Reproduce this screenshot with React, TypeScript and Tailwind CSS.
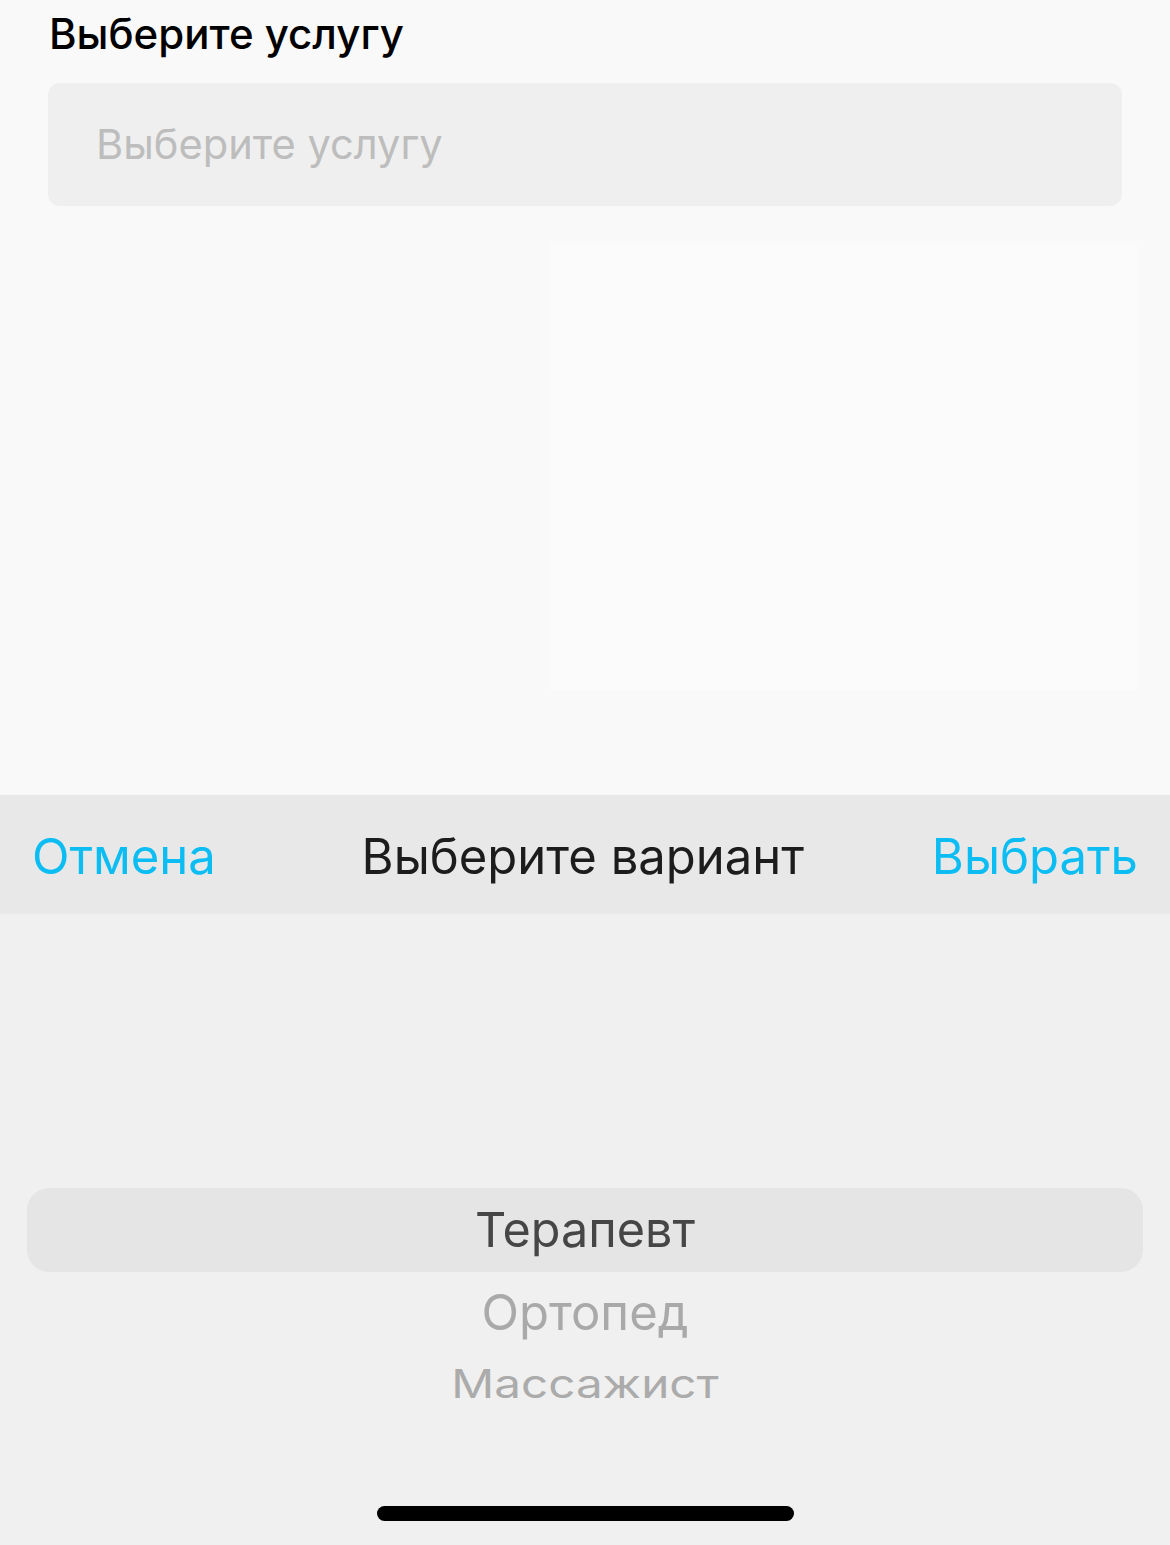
const font = { fontFamily: "Inter, Roboto, 'Noto Sans', sans-serif" }

export default function App() {
  return (
    <div className="w-[1170px] h-[1545px] flex flex-col bg-[#f9f9f9] overflow-hidden" style={font}>
      {/* Form area */}
      <div className="flex-1 flex flex-col px-12">
        <div className="pt-[8px] pl-[1px] text-[42px] leading-[52px] font-medium text-black">Выберите услугу</div>
        <div className="mt-[23px] h-[123px] rounded-[12px] bg-[#efefef] flex items-center pl-[48px] text-[41.6px] text-[#bdbdbd]">
          Выберите услугу
        </div>
        <div className="mt-[37px] ml-[502px] mr-[-15px] h-[447px] bg-[#fbfbfb]" />
      </div>

      {/* Picker sheet */}
      <div className="h-[750px] flex flex-col bg-[#f0f0f0]">
        <div className="h-[119px] bg-[#e8e8e8] flex items-center justify-between pl-[32px] pr-[32px] pt-[4px] text-[49px]">
          <span className="text-[#0bbdf2]">Отмена</span>
          <span className="text-[#1c1c1c] ml-[18px]">Выберите вариант</span>
          <span className="text-[#0bbdf2]">Выбрать</span>
        </div>
        <div className="flex-1 flex flex-col items-center px-[27px]">
          <div className="mt-[274px] w-full h-[84px] rounded-[22px] bg-[#e5e5e5] flex items-center justify-center text-[48.5px] text-[#464646]">
            Терапевт
          </div>
          <div className="mt-[6px] h-[70px] flex items-center text-[49px] text-[#a9a9a9]">Ортопед</div>
          <div className="h-[72px] flex items-center text-[47.6px] text-[#ababab] scale-y-[0.84]">Массажист</div>
          <div className="mt-auto mb-[24px] w-[417px] h-[15px] rounded-full bg-black" />
        </div>
      </div>
    </div>
  )
}
